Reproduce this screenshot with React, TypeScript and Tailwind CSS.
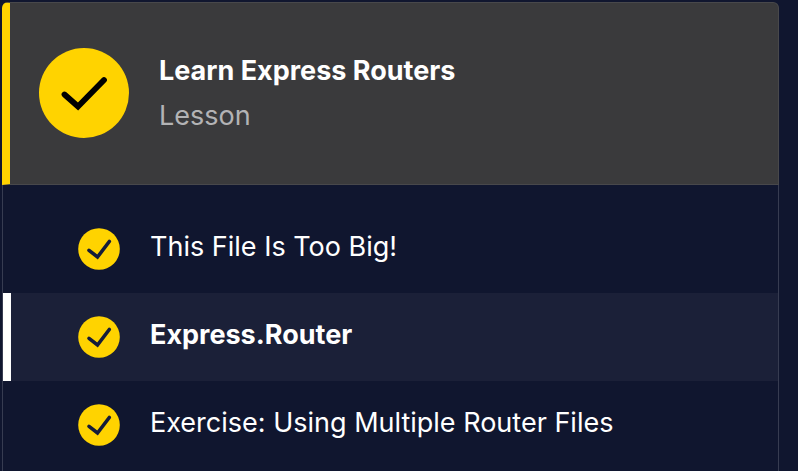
import React from "react";

type Item = { title: string; active?: boolean };

const items: Item[] = [
  { title: "This File Is Too Big!" },
  { title: "Express.Router", active: true },
  { title: "Exercise: Using Multiple Router Files" },
];

function LessonCheck() {
  return (
    <svg viewBox="0 0 90 90" className="size-[90px] shrink-0" role="img" aria-label="Completed">
      <circle cx="45" cy="45" r="45" fill="#ffd300" />
      <path
        d="M25.500 46.500 L39 58.500 L65 32"
        fill="none"
        stroke="#000"
        strokeWidth="5.800"
        strokeLinecap="round"
        strokeLinejoin="miter"
      />
    </svg>
  );
}

function ItemCheck() {
  return (
    <svg viewBox="0 0 42 42" className="size-[42px] shrink-0" role="img" aria-label="Completed">
      <circle cx="21" cy="21" r="20.800" fill="#ffd300" />
      <path
        d="M11 22.300 L19.500 29 L31.300 13.500"
        fill="none"
        stroke="#141c3a"
        strokeWidth="3.600"
        strokeLinecap="round"
        strokeLinejoin="miter"
      />
    </svg>
  );
}

export default function App() {
  return (
    <main className="flex min-h-screen bg-[#10162f] pt-0.5 pr-[19px] pl-0.5 font-['Inter',sans-serif] text-[27px] leading-9 text-white">
      <section className="flex grow flex-col rounded-t-md">
        <header className="flex items-start gap-[30px] rounded-t-md border border-l-8 border-[#48484b] border-l-[#ffd300] bg-[#3a3a3c] pt-[45px] pb-[46px] pl-[29px]">
          <LessonCheck />
          <div className="flex flex-col gap-[9px] pt-[5px]">
            <h1 className="font-bold">Learn Express Routers</h1>
            <p className="text-[#b3b3b5]">Lesson</p>
          </div>
        </header>
        <ul className="grow border-x border-[#373c51] pt-5">
          {items.map((item) => (
            <li key={item.title}>
              <a
                href="#"
                aria-current={item.active ? "page" : undefined}
                className={
                  item.active
                    ? "flex h-[88px] items-center gap-[30px] border-l-8 border-white bg-[#1b2038] pl-[67px] font-bold"
                    : "flex h-[88px] items-center gap-[30px] border-l-8 border-transparent pl-[67px]"
                }
              >
                <ItemCheck />
                <span className="pb-1">{item.title}</span>
              </a>
            </li>
          ))}
        </ul>
      </section>
    </main>
  );
}
